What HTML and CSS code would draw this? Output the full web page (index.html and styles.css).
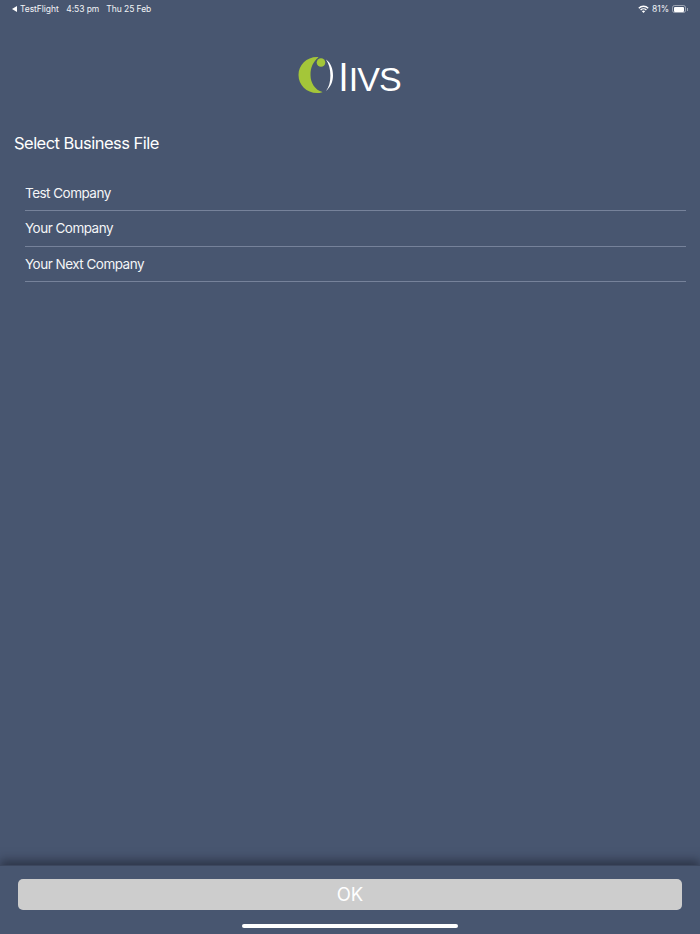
FILE: index.html
```html
<!DOCTYPE html>
<html lang="en">
<head>
<meta charset="utf-8">
<title>Select Business File</title>
<link rel="stylesheet" href="styles.css">
</head>
<body>
<div class="screen">
  <header class="status">
    <div class="status-left">
      <span class="back-tri"></span><span class="status-app">TestFlight</span>
      <span class="status-time">4:53 pm</span>
      <span>Thu 25 Feb</span>
    </div>
    <div class="status-right">
      <svg class="wifi" width="11" height="8" viewBox="0 0 11 8"><path d="M.3 2.7A7.4 7.4 0 0 1 10.7 2.7L9.7 3.7A6 6 0 0 0 1.3 3.7Z" fill="#fff"/><path d="M2.1 4.5A4.9 4.9 0 0 1 8.9 4.5L7.9 5.5A3.5 3.5 0 0 0 3.1 5.5Z" fill="#fff"/><path d="M3.9 6.2A2.3 2.3 0 0 1 7.1 6.2L5.500 7.9Z" fill="#fff"/></svg>
      <span>81%</span>
      <span class="battery"><span class="battery-fill"></span></span><span class="battery-cap"></span>
    </div>
  </header>

  <div class="logo">
    <svg class="logo-mark" width="38" height="38" viewBox="0 0 38 38">
      <path d="M19 1C8.500 1 0.500 9 0.500 19S8.500 37 19 37C23 37 24 36.300 24.500 36C17 34 12.500 27 12.500 19S15 6 20.500 1.200C20 1.100 19.500 1 19 1Z" fill="#a4c639"/>
      <circle cx="23" cy="6.500" r="4.300" fill="#a4c639"/>
      <path d="M28 3.500C33 7 35 13 35 19.500S32.500 31 28 35C31 31 32.400 26 32.400 19.500S31 8 28 3.500Z" fill="#fff"/>
    </svg>
    <span class="logo-text"><span class="logo-l">l</span>IVS</span>
  </div>

  <main class="content">
    <h1 class="title">Select Business File</h1>
    <ul class="list">
      <li class="row">Test Company</li>
      <li class="row">Your Company</li>
      <li class="row">Your Next Company</li>
    </ul>
  </main>

  <footer class="footer">
    <button class="ok" type="button">OK</button>
    <div class="home-bar"></div>
  </footer>
</div>
</body>
</html>
```
FILE: styles.css
```css
* { box-sizing: border-box; }
html, body { margin: 0; padding: 0; }
body {
  width: 700px;
  height: 934px;
  overflow: hidden;
  background: #485670;
  color: #fff;
  font-family: Inter, "Liberation Sans", sans-serif;
}
.screen {
  height: 934px;
  display: flex;
  flex-direction: column;
}
.status {
  height: 18px;
  flex: none;
  padding: 0 12px;
  display: flex;
  justify-content: space-between;
  align-items: center;
  font-size: 8.500px;
  line-height: 18px;
  letter-spacing: -.05px;
  color: #f2f4f7;
}
.status-left, .status-right { display: flex; align-items: center; }
.back-tri {
  width: 0; height: 0;
  border-style: solid;
  border-width: 3px 5px 3px 0;
  border-color: transparent #fff transparent transparent;
  margin-right: 3px;
}
.status-time { margin: 0 7px 0 7.500px; }
.wifi { margin-right: 3px; }
.battery {
  width: 14px; height: 8px;
  margin-left: 3px;
  border: 1px solid rgba(255,255,255,.45);
  border-radius: 2.500px;
  padding: .5px;
  display: block;
}
.battery-fill { display: block; width: 10.500px; height: 5px; background: #fff; border-radius: 1px; }
.battery-cap { width: 1px; height: 3px; margin-left: 1px; background: rgba(255,255,255,.45); }

.logo {
  height: 38px;
  margin-top: 38px;
  flex: none;
  display: flex;
  justify-content: center;
  align-items: flex-end;
  padding-right: 1px;
}
.logo-mark { display: block; margin-right: 3px; flex: none; }
.logo-text {
  font-family: "Liberation Sans", sans-serif;
  font-weight: 400;
  font-size: 34px;
  line-height: 38px;
  letter-spacing: -1px;
  height: 38px;
  padding-top: 3px;
  color: #fff;
}
.logo-l { font-size: 38px; letter-spacing: 1px; }

.content { flex: 1; padding-top: 39px; }
.title {
  margin: 0 0 0 14px;
  font-size: 16.500px;
  font-weight: 400;
  line-height: 20px;
  letter-spacing: -.53px;
  color: #fff;
}
.list { list-style: none; margin: 22.500px 14px 0 25px; padding: 0; }
.row {
  height: 35.500px;
  line-height: 35px;
  font-size: 13.500px;
  letter-spacing: -.52px;
  color: #f4f5f7;
  border-bottom: 1px solid #76829a;
}

.footer {
  height: 69px;
  flex: none;
  position: relative;
  background: #485670;
  border-top: 1px solid #3c475e;
  box-shadow: 0 -5px 9px rgba(25,30,44,.55);
  padding: 13px 18px 0;
}
.ok {
  display: block;
  width: 100%;
  height: 31px;
  padding: 0;
  border: 0;
  border-radius: 5px;
  background: #cdcdcd;
  color: #fff;
  font-family: inherit;
  font-size: 18.500px;
  line-height: 31px;
}
.home-bar {
  position: absolute;
  left: 242px;
  bottom: 6px;
  width: 216px;
  height: 4px;
  border-radius: 2px;
  background: #fff;
}
```
